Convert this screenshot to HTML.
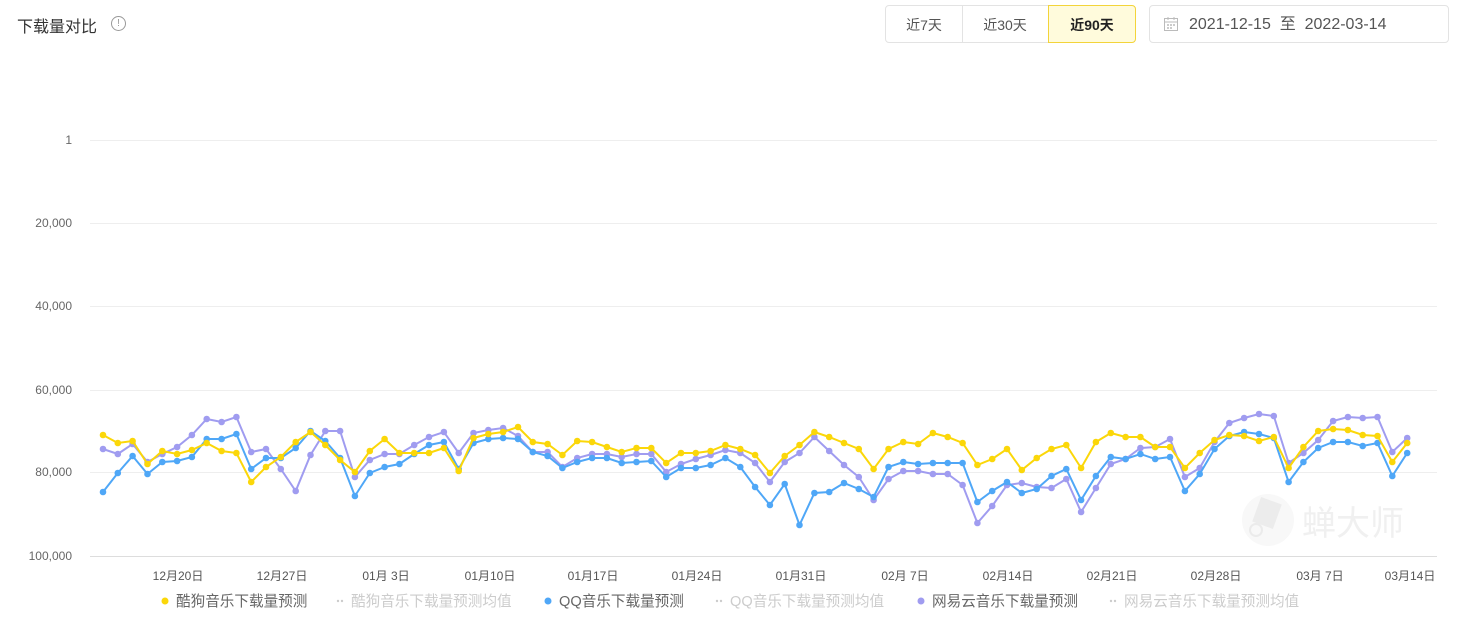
<!DOCTYPE html>
<html><head><meta charset="utf-8"><style>
body{margin:0;width:1477px;height:630px;background:#fff;font-family:"Liberation Sans","Noto Sans CJK SC",sans-serif;position:relative;overflow:hidden}
.t{position:absolute;left:17px;top:13px;font-size:16px;color:#333}
.i{position:absolute;left:111px;top:16px;width:15px;height:15px;border:1px solid #999;border-radius:50%;font-size:10px;color:#999;text-align:center;line-height:14px;box-sizing:border-box}
.seg{position:absolute;top:5px;height:38px;box-sizing:border-box;border:1px solid #e3e3e3;font-size:14px;color:#555;text-align:center;line-height:38px}
.date{position:absolute;left:1149px;top:5px;width:300px;height:38px;border:1px solid #e3e3e3;border-radius:4px;box-sizing:border-box;font-size:16px;color:#555;line-height:38px;padding-left:39px}
</style></head><body>
<div class="t">下载量对比</div><div class="i">!</div>
<div class="seg" style="left:885px;width:78px;border-radius:4px 0 0 4px">近7天</div>
<div class="seg" style="left:962px;width:87px;border-left:none">近30天</div>
<div class="seg" style="left:1048px;width:88px;background:#fffbdc;border-color:#f3d43a;border-radius:0 4px 4px 0;font-weight:bold;color:#222">近90天</div>
<div class="date">2021-12-15&nbsp; 至&nbsp; 2022-03-14</div>
<svg style="position:absolute;left:1163px;top:16px" width="16" height="16"><rect x="1.5" y="2.5" width="13" height="12" fill="none" stroke="#bbb"/><line x1="1.5" y1="6" x2="14.5" y2="6" stroke="#bbb"/><line x1="5" y1="1" x2="5" y2="4" stroke="#bbb"/><line x1="11" y1="1" x2="11" y2="4" stroke="#bbb"/><g fill="#ccc"><rect x="4" y="8" width="2" height="2"/><rect x="7" y="8" width="2" height="2"/><rect x="10" y="8" width="2" height="2"/><rect x="4" y="11" width="2" height="2"/><rect x="7" y="11" width="2" height="2"/></g></svg>
<svg id="c" style="position:absolute;left:0;top:0" width="1477" height="630" font-family="Liberation Sans, Noto Sans CJK SC, sans-serif"></svg>
<script>
var Y=[435,443,441,464,451,454,450,443,451,453,482,467,457,442,432,445,460,472,451,439,453,453,453,448,471,438,434,432,427,442,444,455,441,442,447,452,448,448,463,453,453,451,445,449,455,473,456,445,432,437,443,449,469,449,442,444,433,437,443,465,459,449,470,458,449,445,468,442,433,437,437,447,447,468,453,440,435,436,441,437,468,447,431,429,430,435,436,462,443];
var B=[492,473,456,474,462,461,457,439,439,434,469,458,458,448,431,441,458,496,473,467,464,454,445,442,469,443,439,438,439,452,456,468,462,458,458,463,462,461,477,468,468,465,458,467,487,505,484,525,493,492,483,489,497,467,462,464,463,463,463,502,491,482,493,489,476,469,500,476,457,459,454,459,457,491,474,449,436,432,434,438,482,462,448,442,442,446,443,476,453];
var P=[449,454,444,462,454,447,435,419,422,417,452,449,469,491,455,431,431,477,460,454,454,445,437,432,453,433,430,428,436,452,452,467,458,454,454,457,454,454,472,464,459,455,450,453,463,482,462,453,437,451,465,477,500,479,471,471,474,474,485,523,506,485,483,487,488,479,512,488,464,459,448,447,439,477,468,442,423,418,414,416,463,453,440,421,417,418,417,452,438];
var s='';
[140,223,306,390,472].forEach(function(y){s+='<line x1="90" x2="1437" y1="'+(y+.5)+'" y2="'+(y+.5)+'" stroke="#eee"/>';});
s+='<line x1="90" x2="1437" y1="556.5" y2="556.5" stroke="#ddd"/>';
[[1,140],['20,000',223],['40,000',306],['60,000',390],['80,000',472],['100,000',556]].forEach(function(a){s+='<text x="72" y="'+(a[1]+4)+'" text-anchor="end" font-size="12" fill="#666">'+a[0]+'</text>';});
[['12月20日',178],['12月27日',282],['01月 3日',386],['01月10日',490],['01月17日',593],['01月24日',697],['01月31日',801],['02月 7日',905],['02月14日',1008],['02月21日',1112],['02月28日',1216],['03月 7日',1320],['03月14日',1410]].forEach(function(a){s+='<text x="'+a[1]+'" y="580" text-anchor="middle" font-size="12" fill="#555">'+a[0]+'</text>';});
s+='<circle cx="1268" cy="520" r="26" fill="#f8f8f8"/><rect x="1256" y="500" width="22" height="26" fill="#ececec" transform="rotate(20 1267 513)"/><circle cx="1256" cy="530" r="6" fill="none" stroke="#ebebeb" stroke-width="2"/><text x="1302" y="535" font-size="34" fill="#f0f0f0">蝉大师</text>';
function ser(d,c){var p=d.map(function(v,i){return (103+i*14.82).toFixed(1)+','+v;}).join(' ');var r='<polyline points="'+p+'" fill="none" stroke="'+c+'" stroke-width="2"/>';d.forEach(function(v,i){r+='<circle cx="'+(103+i*14.82).toFixed(1)+'" cy="'+v+'" r="3.3" fill="'+c+'"/>';});return r;}
s+=ser(P,'#a09cf0')+ser(B,'#4fa7f7')+ser(Y,'#fbd709');
function leg(x,c,t,col,dot){s+=(dot?'<circle cx="'+x+'" cy="601" r="3.5" fill="'+c+'"/>':'<circle cx="'+(x-2)+'" cy="601" r="1.2" fill="#ccc"/><circle cx="'+(x+2)+'" cy="601" r="1.2" fill="#ccc"/>')+'<text x="'+(x+11)+'" y="606" font-size="14.6" fill="'+col+'">'+t+'</text>';}
leg(165,'#fbd709','酷狗音乐下载量预测','#666',1);leg(340,'','酷狗音乐下载量预测均值','#ccc',0);
leg(548,'#4fa7f7','QQ音乐下载量预测','#666',1);leg(719,'','QQ音乐下载量预测均值','#ccc',0);
leg(921,'#a09cf0','网易云音乐下载量预测','#666',1);leg(1113,'','网易云音乐下载量预测均值','#ccc',0);
document.getElementById('c').innerHTML=s;
</script>
</body></html>
